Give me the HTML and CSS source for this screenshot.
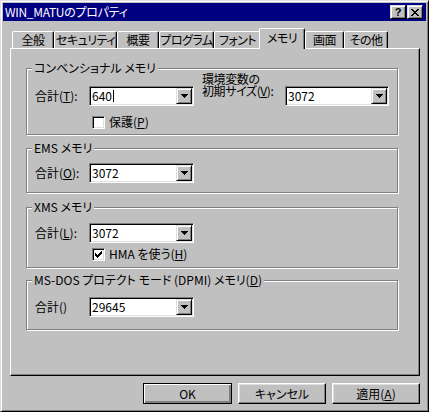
FILE: index.html
```html
<!DOCTYPE html>
<html lang="ja">
<head>
  <meta charset="UTF-8" />
  <title>WIN_MATUのプロパティ</title>
  <link rel="stylesheet" href="styles.css">
</head>
<body>

<div class="window">
  <!-- Title bar -->
  <div class="titlebar">
    <span class="title">WIN_MATUのプロパティ</span>
    <div class="title-btns">
      <span class="tbtn help">?</span>
      <span class="tbtn">
        <svg width="8" height="7" shape-rendering="crispEdges"><path d="M0 0h2v1H0zM6 0h2v1H6zM1 1h2v1H1zM5 1h2v1H5zM2 2h4v1H2zM3 3h2v1H3zM2 4h4v1H2zM1 5h2v1H1zM5 5h2v1H5zM0 6h2v1H0zM6 6h2v1H6z"/></svg>
      </span>
    </div>
  </div>

  <div class="body">
    <!-- Tabs -->
    <div class="tabs">
      <div class="tab tab-general">全般</div>
      <div class="tab tab-security">セキュリティ</div>
      <div class="tab tab-summary">概要</div>
      <div class="tab tab-program">プログラム</div>
      <div class="tab tab-font">フォント</div>
      <div class="tab tab-memory active">メモリ</div>
      <div class="tab tab-screen">画面</div>
      <div class="tab tab-other">その他</div>
    </div>

    <!-- Memory page -->
    <div class="panel">
      <div class="group group-conv">
        <span class="group-title">コンベンショナル メモリ</span>
        <div class="row">
          <span class="label">合計(<u>T</u>):</span>
          <div class="combo">
            <span class="combo-text">640<span class="caret"></span></span>
            <span class="combo-btn"><svg width="7" height="4" shape-rendering="crispEdges"><path d="M0 0h7v1H0zM1 1h5v1H1zM2 2h3v1H2zM3 3h1v1H3z"/></svg></span>
          </div>
          <div class="label-env">
            <span>環境変数の</span>
            <span>初期サイズ(<u>V</u>):</span>
          </div>
          <div class="combo combo-env">
            <span class="combo-text">3072</span>
            <span class="combo-btn"><svg width="7" height="4" shape-rendering="crispEdges"><path d="M0 0h7v1H0zM1 1h5v1H1zM2 2h3v1H2zM3 3h1v1H3z"/></svg></span>
          </div>
        </div>
        <div class="check-row check-conv">
          <span class="checkbox"></span>
          <span class="check-label">保護(<u>P</u>)</span>
        </div>
      </div>

      <div class="group group-ems">
        <span class="group-title">EMS メモリ</span>
        <div class="row">
          <span class="label">合計(<u>O</u>):</span>
          <div class="combo">
            <span class="combo-text">3072</span>
            <span class="combo-btn"><svg width="7" height="4" shape-rendering="crispEdges"><path d="M0 0h7v1H0zM1 1h5v1H1zM2 2h3v1H2zM3 3h1v1H3z"/></svg></span>
          </div>
        </div>
      </div>

      <div class="group group-xms">
        <span class="group-title">XMS メモリ</span>
        <div class="row">
          <span class="label">合計(<u>L</u>):</span>
          <div class="combo">
            <span class="combo-text">3072</span>
            <span class="combo-btn"><svg width="7" height="4" shape-rendering="crispEdges"><path d="M0 0h7v1H0zM1 1h5v1H1zM2 2h3v1H2zM3 3h1v1H3z"/></svg></span>
          </div>
        </div>
        <div class="check-row check-xms">
          <span class="checkbox">
            <svg width="7" height="7" shape-rendering="crispEdges"><path d="M6 0h1v1H6zM5 1h2v1H5zM0 2h1v1H0zM4 2h3v1H4zM0 3h2v1H0zM3 3h3v1H3zM0 4h5v1H0zM1 5h3v1H1zM2 6h1v1H2z"/></svg>
          </span>
          <span class="check-label">HMA を使う(<u>H</u>)</span>
        </div>
      </div>

      <div class="group group-dpmi">
        <span class="group-title">MS-DOS プロテクト モード (DPMI) メモリ(<u>D</u>)</span>
        <div class="row">
          <span class="label">合計()</span>
          <div class="combo">
            <span class="combo-text">29645</span>
            <span class="combo-btn"><svg width="7" height="4" shape-rendering="crispEdges"><path d="M0 0h7v1H0zM1 1h5v1H1zM2 2h3v1H2zM3 3h1v1H3z"/></svg></span>
          </div>
        </div>
      </div>
    </div>

    <!-- Dialog buttons -->
    <div class="buttons">
      <button class="btn btn-default">OK</button>
      <button class="btn">キャンセル</button>
      <button class="btn">適用(<u>A</u>)</button>
    </div>
  </div>
</div>

</body>
</html>
```

FILE: styles.css
```css
:root {
  --face: #c0c0c0;
  --light: #dfdfdf;
  --shadow: #808080;
  --dark: #000000;
  --white: #ffffff;
  --title: #000080;
}

* {
  box-sizing: border-box;
}

body {
  margin: 0;
  background: var(--face);
  font-family: "Noto Sans CJK JP", sans-serif;
  font-size: 12px;
  font-feature-settings: "palt";
  color: #000;
}

u {
  text-decoration: underline;
  text-underline-offset: 1px;
}

/* Window frame */
.window {
  width: 429px;
  height: 412px;
  background: var(--face);
  border: 1px solid;
  border-color: var(--light) var(--dark) var(--dark) var(--light);
  box-shadow: inset 1px 1px 0 var(--white), inset -1px -1px 0 var(--shadow);
  padding: 2px;
}

.titlebar {
  height: 18px;
  background: var(--title);
  color: var(--white);
  display: flex;
  align-items: center;
  justify-content: space-between;
  padding: 0 3px 0 2px;
}

.title {
  line-height: 14px;
  letter-spacing: -0.3px;
}

.title-btns {
  display: flex;
  gap: 1px;
}

.tbtn {
  width: 16px;
  height: 14px;
  display: flex;
  align-items: center;
  justify-content: center;
  background: var(--face);
  color: #000;
  border: 1px solid;
  border-color: var(--light) var(--dark) var(--dark) var(--light);
  box-shadow: inset 1px 1px 0 var(--white), inset -1px -1px 0 var(--shadow);
}

.tbtn.help {
  font-family: "Liberation Sans", sans-serif;
  font-weight: 700;
  font-size: 11px;
  line-height: 11px;
}

/* Body */
.body {
  padding: 7px 6px 0 7px;
}

.tabs {
  display: flex;
  align-items: flex-end;
  height: 20px;
  padding-left: 2px;
}

.tab {
  height: 17px;
  line-height: 15px;
  text-align: center;
  letter-spacing: -0.5px;
  background: var(--face);
  border-top: 1px solid var(--white);
  border-left: 1px solid var(--white);
  border-right: 1px solid var(--dark);
  border-radius: 2px 2px 0 0;
  box-shadow: inset -1px 0 0 var(--shadow);
  white-space: nowrap;
  overflow: hidden;
}

.tab.active {
  height: 21px;
  line-height: 17px;
  margin-bottom: -1px;
  margin-left: -2px;
  position: relative;
  z-index: 1;
}

.tab-general { width: 42px; }
.tab-security { width: 63px; }
.tab-summary { width: 42px; }
.tab-program { width: 55px; }
.tab-font { width: 47px; }
.tab-memory { width: 46px; }
.tab-screen { width: 39px; }
.tab-other { width: 44px; }

.panel {
  width: 410px;
  height: 328px;
  border: 1px solid;
  border-color: var(--white) var(--dark) var(--dark) var(--white);
  box-shadow: inset -1px -1px 0 var(--shadow);
  padding: 19px 0 0 15px;
}

/* Group boxes */
.group {
  position: relative;
  width: 372px;
  border: 1px solid var(--shadow);
  box-shadow: 1px 1px 0 var(--white), inset 1px 1px 0 var(--white);
  padding-left: 8px;
}

.group-title {
  position: absolute;
  top: -8px;
  left: 5px;
  padding: 0 2px;
  line-height: 14px;
  background: var(--face);
  white-space: nowrap;
}

.group-conv { height: 67px; padding-top: 17px; }
.group-ems { height: 45px; padding-top: 14px; margin-top: 13px; }
.group-xms { height: 61px; padding-top: 15px; margin-top: 14px; }
.group-dpmi { height: 50px; padding-top: 16px; margin-top: 12px; }

.row {
  display: flex;
  align-items: center;
}

.label {
  width: 54px;
  line-height: 14px;
}

.label-env {
  align-self: flex-start;
  display: flex;
  flex-direction: column;
  gap: 0;
  width: 83px;
  margin: -13px 0 0 8px;
  line-height: 12px;
  letter-spacing: -0.4px;
}

.label-env span {
  height: 12px;
  white-space: nowrap;
}

/* Combo box */
.combo {
  width: 105px;
  height: 20px;
  display: flex;
  align-items: center;
  background: var(--white);
  border: 1px solid;
  border-color: var(--shadow) var(--white) var(--white) var(--shadow);
  box-shadow: inset 1px 1px 0 var(--dark), inset -1px -1px 0 var(--light);
  padding: 1px;
}

.combo-env {
  width: 104px;
}

.combo-text {
  flex: 1;
  display: flex;
  align-items: center;
  padding-left: 1px;
  line-height: 14px;
}

.caret {
  display: inline-block;
  width: 1px;
  height: 12px;
  margin-left: 1px;
  background: #000;
}

.combo-btn {
  width: 16px;
  height: 16px;
  display: flex;
  align-items: center;
  justify-content: center;
  background: var(--face);
  border: 1px solid;
  border-color: var(--light) var(--dark) var(--dark) var(--light);
  box-shadow: inset 1px 1px 0 var(--white), inset -1px -1px 0 var(--shadow);
}

/* Check boxes */
.check-row {
  display: flex;
  align-items: center;
  padding-left: 57px;
}

.check-conv { margin-top: 9px; }
.check-xms { margin-top: 4px; }

.checkbox {
  width: 13px;
  height: 13px;
  display: flex;
  align-items: center;
  justify-content: center;
  background: var(--white);
  border: 1px solid;
  border-color: var(--shadow) var(--white) var(--white) var(--shadow);
  box-shadow: inset 1px 1px 0 var(--dark), inset -1px -1px 0 var(--light);
}

.check-label {
  margin-left: 4px;
  line-height: 14px;
}

/* Dialog buttons */
.buttons {
  display: flex;
  justify-content: flex-end;
  gap: 6px;
  margin-top: 7px;
}

.btn {
  width: 88px;
  height: 21px;
  padding: 0;
  font-family: inherit;
  font-size: 12px;
  font-feature-settings: "palt";
  color: #000;
  background: var(--face);
  border: 1px solid;
  border-color: var(--white) var(--dark) var(--dark) var(--white);
  box-shadow: inset -1px -1px 0 var(--shadow), inset 1px 1px 0 var(--light);
}

.btn-default {
  width: 89px;
  border-color: var(--dark);
  box-shadow: inset 1px 1px 0 var(--white), inset -1px -1px 0 var(--shadow), inset -2px -2px 0 var(--shadow);
}
```
